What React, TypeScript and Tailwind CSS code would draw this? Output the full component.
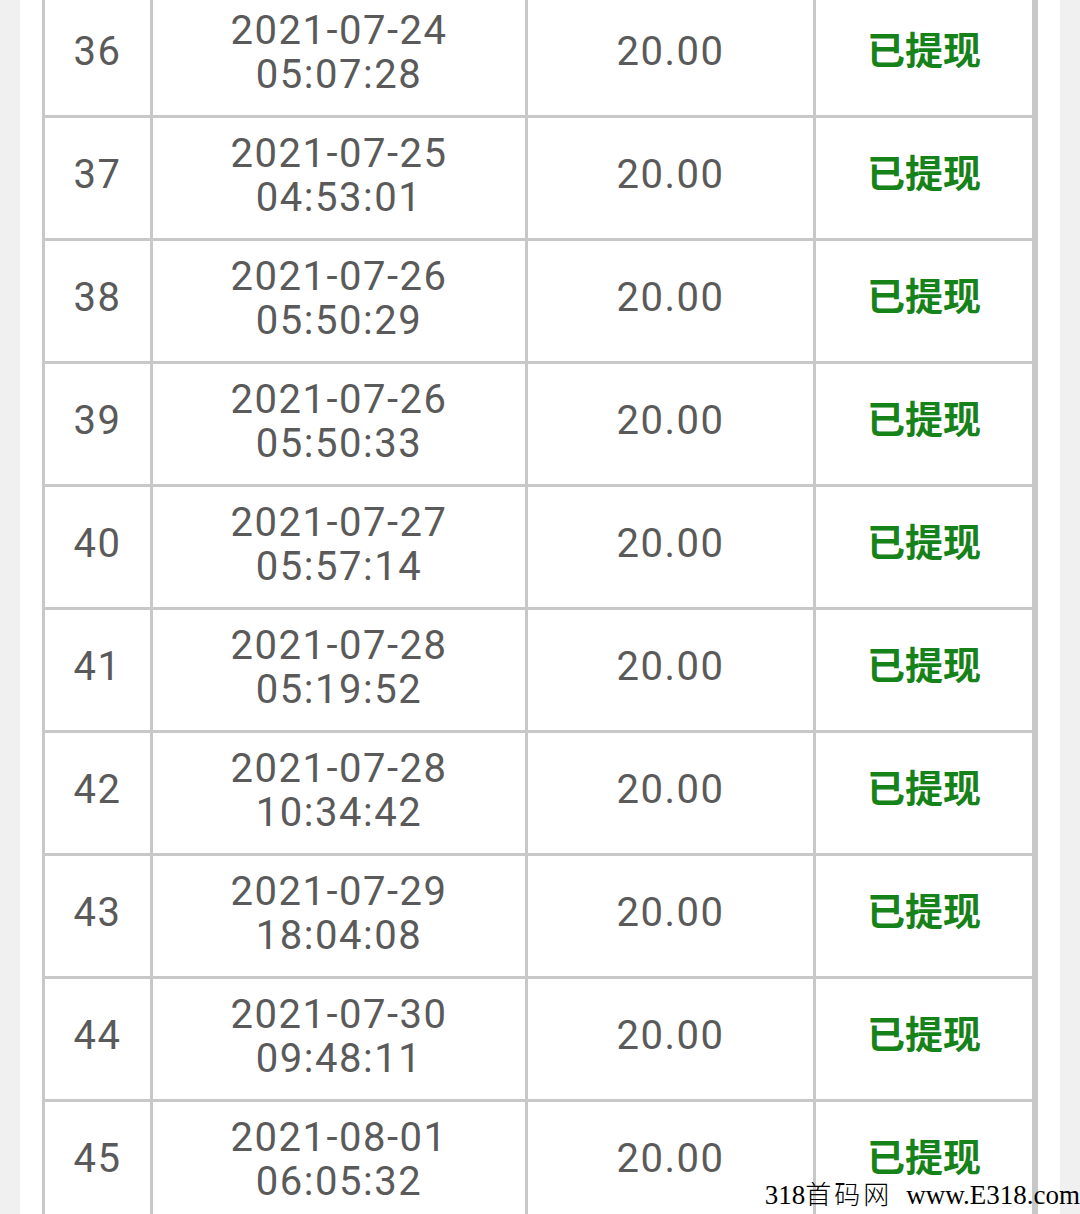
const rows = [
  ["36", "2021-07-24", "05:07:28"],
  ["37", "2021-07-25", "04:53:01"],
  ["38", "2021-07-26", "05:50:29"],
  ["39", "2021-07-26", "05:50:33"],
  ["40", "2021-07-27", "05:57:14"],
  ["41", "2021-07-28", "05:19:52"],
  ["42", "2021-07-28", "10:34:42"],
  ["43", "2021-07-29", "18:04:08"],
  ["44", "2021-07-30", "09:48:11"],
  ["45", "2021-08-01", "06:05:32"],
];

export default function App() {
  return (
    <div className="relative w-[1080px] h-[1214px] overflow-hidden bg-[#f0f0f0] px-[20px]">
      <div className="h-[1260px] bg-white px-[22px]">
        {/* Withdrawal records */}
        <div
          className="-mt-[8px] grid grid-cols-[105px_372px_285px_216px] auto-rows-[120px] gap-[3px] bg-[#c8c8c8] p-[3px] text-[40px] leading-[44px] tracking-[1.5px] text-[#5a5a5a]"
          style={{ fontFamily: "Roboto, 'Noto Sans', sans-serif" }}
        >
          {rows.map(([no, date, time]) => (
            <div key={no} className="contents">
              <div className="flex items-center justify-center bg-white pb-[6px]">{no}</div>
              <div className="flex flex-col items-center justify-center bg-white pb-[4px]">
                <span>{date}</span>
                <span>{time}</span>
              </div>
              <div className="flex items-center justify-center bg-white pb-[6px]">20.00</div>
              <div
                className="flex items-center justify-center bg-white pb-[14px] text-[38px] font-bold tracking-normal text-[#16821a]"
                style={{ fontFamily: "'Noto Sans CJK SC', sans-serif" }}
              >
                已提现
              </div>
            </div>
          ))}
        </div>
      </div>

      {/* watermark */}
      <div
        className="absolute right-0 bottom-[4px] text-[27px] leading-[30px] text-black whitespace-nowrap"
        style={{ fontFamily: "'Liberation Serif', 'Noto Sans CJK SC', serif" }}
      >
        318<span style={{ fontFamily: "'Noto Sans CJK SC', serif" }} className="tracking-[3px] text-[26px] font-light">首码网</span>
        <span className="ml-[14px]">www.E318.com</span>
      </div>
    </div>
  );
}
